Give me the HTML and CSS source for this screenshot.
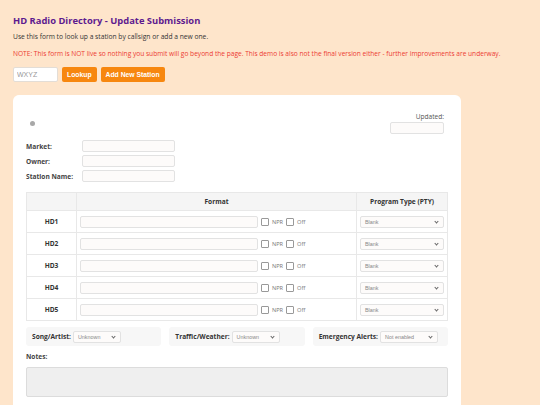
FILE: index.html
```html
<!DOCTYPE html>
<html>
<head>
<meta charset="utf-8">
<title>HD Radio Directory - Update Submission</title>
<link rel="stylesheet" href="styles.css">
</head>
<body>
<h1 class="title">HD Radio Directory - Update Submission</h1>
<p class="intro">Use this form to look up a station by callsign or add a new one.</p>
<p class="note">NOTE: This form is NOT live so nothing you submit will go beyond the page. This demo is also not the final version either - further improvements are underway.</p>
<div class="lookup">
  <input class="call" type="text" placeholder="WXYZ">
  <button class="btn">Lookup</button>
  <button class="btn">Add New Station</button>
</div>
<div class="card">
  <div class="top">
    <span class="dot"></span>
    <div class="updated">
      <label>Updated:</label>
      <input class="upd" type="text">
    </div>
  </div>
  <div class="fields">
    <div class="field"><label>Market:</label><input type="text"></div>
    <div class="field"><label>Owner:</label><input type="text"></div>
    <div class="field"><label>Station Name:</label><input type="text"></div>
  </div>
  <table class="grid">
    <thead>
      <tr><th class="c1"></th><th class="c2">Format</th><th class="c3">Program Type (PTY)</th></tr>
    </thead>
    <tbody>
      <tr><td class="hd">HD1</td><td><div class="fmt"><input type="text"><span class="chk"></span><span class="cl">NPR</span><span class="chk"></span><span class="cl">Off</span></div></td><td><div class="sel">Blank<span class="car"></span></div></td></tr>
      <tr><td class="hd">HD2</td><td><div class="fmt"><input type="text"><span class="chk"></span><span class="cl">NPR</span><span class="chk"></span><span class="cl">Off</span></div></td><td><div class="sel">Blank<span class="car"></span></div></td></tr>
      <tr><td class="hd">HD3</td><td><div class="fmt"><input type="text"><span class="chk"></span><span class="cl">NPR</span><span class="chk"></span><span class="cl">Off</span></div></td><td><div class="sel">Blank<span class="car"></span></div></td></tr>
      <tr><td class="hd">HD4</td><td><div class="fmt"><input type="text"><span class="chk"></span><span class="cl">NPR</span><span class="chk"></span><span class="cl">Off</span></div></td><td><div class="sel">Blank<span class="car"></span></div></td></tr>
      <tr><td class="hd">HD5</td><td><div class="fmt"><input type="text"><span class="chk"></span><span class="cl">NPR</span><span class="chk"></span><span class="cl">Off</span></div></td><td><div class="sel">Blank<span class="car"></span></div></td></tr>
    </tbody>
  </table>
  <div class="opts">
    <div class="opt"><label>Song/Artist:</label><div class="sel small">Unknown<span class="car"></span></div></div>
    <div class="opt"><label>Traffic/Weather:</label><div class="sel small">Unknown<span class="car"></span></div></div>
    <div class="opt"><label>Emergency Alerts:</label><div class="sel wide">Not enabled<span class="car"></span></div></div>
  </div>
  <div class="lbl">Notes:</div>
  <div class="notes"></div>
  <div class="lbl">Change Log:</div>
</div>
</body>
</html>
```
FILE: styles.css
```css
html, body { margin: 0; padding: 0; }
body {
  background: #fee5cb;
  font-family: "Open Sans", "DejaVu Sans", sans-serif;
  color: #333;
  padding: 13px 13px 0 13px;
  height: 392px;
  overflow: hidden;
}
.title {
  margin: 0;
  padding-top: 1px;
  font-size: 9.4px;
  line-height: 13px;
  font-weight: 700;
  color: #5d1a8f;
}
.intro {
  margin: 5px 0 0;
  font-size: 6.7px;
  line-height: 10px;
  color: #333;
}
.note {
  margin: 7px 0 0;
  font-size: 6.6px;
  line-height: 10px;
  color: #ec3b32;
}
.lookup {
  display: flex;
  gap: 4px;
  margin-top: 8px;
  height: 15px;
}
.call {
  width: 45px;
  height: 15px;
  box-sizing: border-box;
  border: 1px solid #e3ddd6;
  border-radius: 2px;
  background: #fff;
  padding: 0 0 0 3px;
  font-family: "Liberation Sans", sans-serif;
  font-size: 7px;
}
.call::placeholder { color: #999; }
.btn {
  height: 15px;
  border: 0;
  border-radius: 2px;
  background: #f7870f;
  color: #fff;
  font-family: "Liberation Sans", sans-serif;
  font-weight: 700;
  font-size: 6.8px;
  padding: 0 5px;
}
.card {
  margin-top: 13px;
  width: 448px;
  box-sizing: border-box;
  background: #fff;
  border-radius: 6px 6px 0 0;
  padding: 17px 13px 0 13px;
  height: 330px;
}
.top {
  display: flex;
  justify-content: space-between;
  padding-right: 4px;
}
.dot {
  width: 5px;
  height: 5px;
  border-radius: 50%;
  background: #a8a8a8;
  margin: 9px 0 0 4px;
}
.updated {
  display: flex;
  flex-direction: column;
  align-items: flex-end;
}
.updated label {
  font-size: 6.6px;
  line-height: 10px;
  color: #555;
}
.upd {
  width: 54px;
  height: 12px;
  box-sizing: border-box;
  border: 1px solid #e2e2e2;
  border-radius: 2px;
  background: #fdfbfa;
  margin: 0;
}
.fields {
  margin-top: 6px;
  display: flex;
  flex-direction: column;
  gap: 3px;
}
.field {
  display: flex;
  align-items: center;
  height: 12px;
}
.field label {
  width: 56px;
  font-size: 6.6px;
  font-weight: 700;
  color: #444;
}
.field input {
  width: 93px;
  height: 12px;
  box-sizing: border-box;
  border: 1px solid #e2e2e2;
  border-radius: 2px;
  background: #fdfbfa;
  margin: 0;
}
.grid {
  margin-top: 10px;
  width: 422px;
  border-collapse: collapse;
  font-size: 6.6px;
}
.grid th, .grid td {
  border: 1px solid #e8e8e8;
  padding: 0;
}
.grid th {
  height: 17px;
  background: #f5f5f5;
  font-weight: 700;
  color: #333;
  text-align: center;
}
.grid td { height: 21px; }
.c1 { width: 49px; }
.c3 { width: 90px; }
.hd {
  text-align: center;
  font-weight: 700;
  color: #333;
}
.fmt {
  display: flex;
  align-items: center;
  padding-left: 3px;
}
.fmt input {
  width: 178px;
  height: 12px;
  box-sizing: border-box;
  border: 1px solid #e2e2e2;
  border-radius: 2px;
  background: #fdfbfa;
  margin: 0;
}
.chk {
  width: 6px;
  height: 6px;
  border: 1px solid #999;
  border-radius: 1px;
  margin-left: 3px;
}
.cl {
  font-size: 5.6px;
  color: #777;
  margin-left: 3px;
}
.sel {
  position: relative;
  box-sizing: border-box;
  height: 12px;
  border: 1px solid #e2e2e2;
  border-radius: 2px;
  background: #fdfbfa;
  margin: 0 3px;
  padding-left: 4px;
  font-family: "Liberation Sans", sans-serif;
  font-size: 5.4px;
  line-height: 10px;
  color: #888;
}
.car {
  position: absolute;
  right: 5px;
  top: 3px;
  width: 2px;
  height: 2px;
  border-right: 1px solid #666;
  border-bottom: 1px solid #666;
  transform: rotate(45deg);
}
.opts {
  display: flex;
  gap: 8px;
  margin-top: 6px;
}
.opt {
  flex: 1;
  height: 19px;
  background: #f7f7f7;
  border-radius: 3px;
  display: flex;
  align-items: center;
  padding-left: 6px;
}
.opt label {
  font-size: 6.6px;
  font-weight: 700;
  color: #333;
  margin-right: 2px;
}
.opt .sel {
  margin: 0;
  width: 48px;
}
.opt .sel.wide { width: 58px; }
.lbl {
  margin-top: 6px;
  font-size: 6.6px;
  font-weight: 700;
  line-height: 10px;
  color: #444;
}
.notes {
  margin-top: 5px;
  height: 30px;
  box-sizing: border-box;
  border: 1px solid #dcdcdc;
  border-radius: 2px;
  background: #efefef;
}
```
